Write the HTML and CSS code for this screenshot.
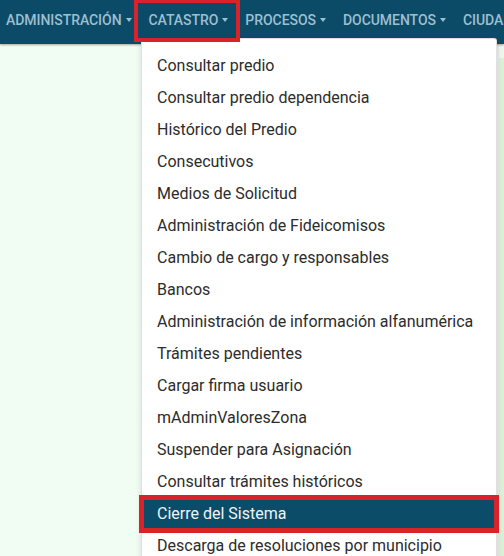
FILE: index.html
```html
<!DOCTYPE html>
<html lang="es">
<head>
    <meta charset="UTF-8">
    <meta name="viewport" content="width=device-width, initial-scale=1.0">
    <title>Catastro</title>
    <link rel="stylesheet" href="styles.css">
</head>
<body>
    <header class="navbar">
        <ul class="nav">
            <li class="nav-item"><a class="nav-link caret">ADMINISTRACIÓN</a></li>
            <li class="nav-item open">
                <a class="nav-link caret marked">CATASTRO</a>
                <ul class="dropdown-menu">
                    <li class="dropdown-item">Consultar predio</li>
                    <li class="dropdown-item">Consultar predio dependencia</li>
                    <li class="dropdown-item">Histórico del Predio</li>
                    <li class="dropdown-item">Consecutivos</li>
                    <li class="dropdown-item">Medios de Solicitud</li>
                    <li class="dropdown-item">Administración de Fideicomisos</li>
                    <li class="dropdown-item">Cambio de cargo y responsables</li>
                    <li class="dropdown-item">Bancos</li>
                    <li class="dropdown-item">Administración de información alfanumérica</li>
                    <li class="dropdown-item">Trámites pendientes</li>
                    <li class="dropdown-item">Cargar firma usuario</li>
                    <li class="dropdown-item">mAdminValoresZona</li>
                    <li class="dropdown-item">Suspender para Asignación</li>
                    <li class="dropdown-item">Consultar trámites históricos</li>
                    <li class="dropdown-item active">Cierre del Sistema</li>
                    <li class="dropdown-item">Descarga de resoluciones por municipio</li>
                </ul>
            </li>
            <li class="nav-item"><a class="nav-link caret">PROCESOS</a></li>
            <li class="nav-item"><a class="nav-link caret">DOCUMENTOS</a></li>
            <li class="nav-item"><a class="nav-link caret">CIUDADANO</a></li>
        </ul>
    </header>

    <main class="content">
        <div class="content-main"></div>
        <aside class="content-side">
            <div class="side-head"></div>
        </aside>
    </main>
</body>
</html>
```

FILE: styles.css
```css
html, body {
    height: 100%;
    overflow: hidden;
}
body {
    margin: 0;
    font-family: Roboto, "Liberation Sans", Arial, sans-serif;
    background: #f1fcf2;
    display: flex;
    flex-direction: column;
}
ul { list-style: none; margin: 0; padding: 0; }

.navbar {
    height: 44px;
    background: #0c4b68;
    box-shadow: 0 1px 2px rgba(0,0,0,0.35);
    position: relative;
    z-index: 2;
    flex-shrink: 0;
}
.nav {
    display: flex;
    height: 100%;
    margin-left: -2.5px;
    white-space: nowrap;
}
.nav-item {
    position: relative;
    display: flex;
}
.nav-link {
    display: flex;
    align-items: center;
    padding: 0 8.5px 4px;
    font-size: 14px;
    font-weight: 500;
    letter-spacing: -0.05px;
    color: #9dbfcf;
    cursor: pointer;
}
.caret::after {
    content: "";
    margin-left: 4px;
    border-top: 4px solid currentColor;
    border-left: 3px solid transparent;
    border-right: 3px solid transparent;
}
.marked::before {
    content: "";
    position: absolute;
    left: -6px;
    right: -3px;
    top: -1px;
    height: 43px;
    box-sizing: border-box;
    border: 4px solid #d8222c;
    z-index: 3;
}

.dropdown-menu {
    position: absolute;
    top: 38px;
    left: 1px;
    width: 356px;
    box-sizing: border-box;
    padding: 11px 0 10px;
    background: #fff;
    border: 1px solid rgba(0,0,0,0.12);
    border-radius: 3px;
    box-shadow: 0 2px 6px rgba(0,0,0,0.12);
    z-index: 2;
}
.dropdown-item {
    position: relative;
    height: 32px;
    line-height: 32px;
    padding: 0 15px;
    font-size: 16px;
    color: #2c2c2c;
    white-space: nowrap;
}
.dropdown-item.active {
    background: #0b4c68;
    color: #eef4f7;
    outline: 5px solid #d8222c;
    outline-offset: -2px;
}

.content {
    flex: 1;
    display: flex;
}
.content-main {
    flex: 1;
}
.content-side {
    width: 5px;
    background: #dbf0d6;
    border-left: 2px solid #e6efe4;
}
.side-head {
    height: 14px;
    background: #eef7ec;
}
```
